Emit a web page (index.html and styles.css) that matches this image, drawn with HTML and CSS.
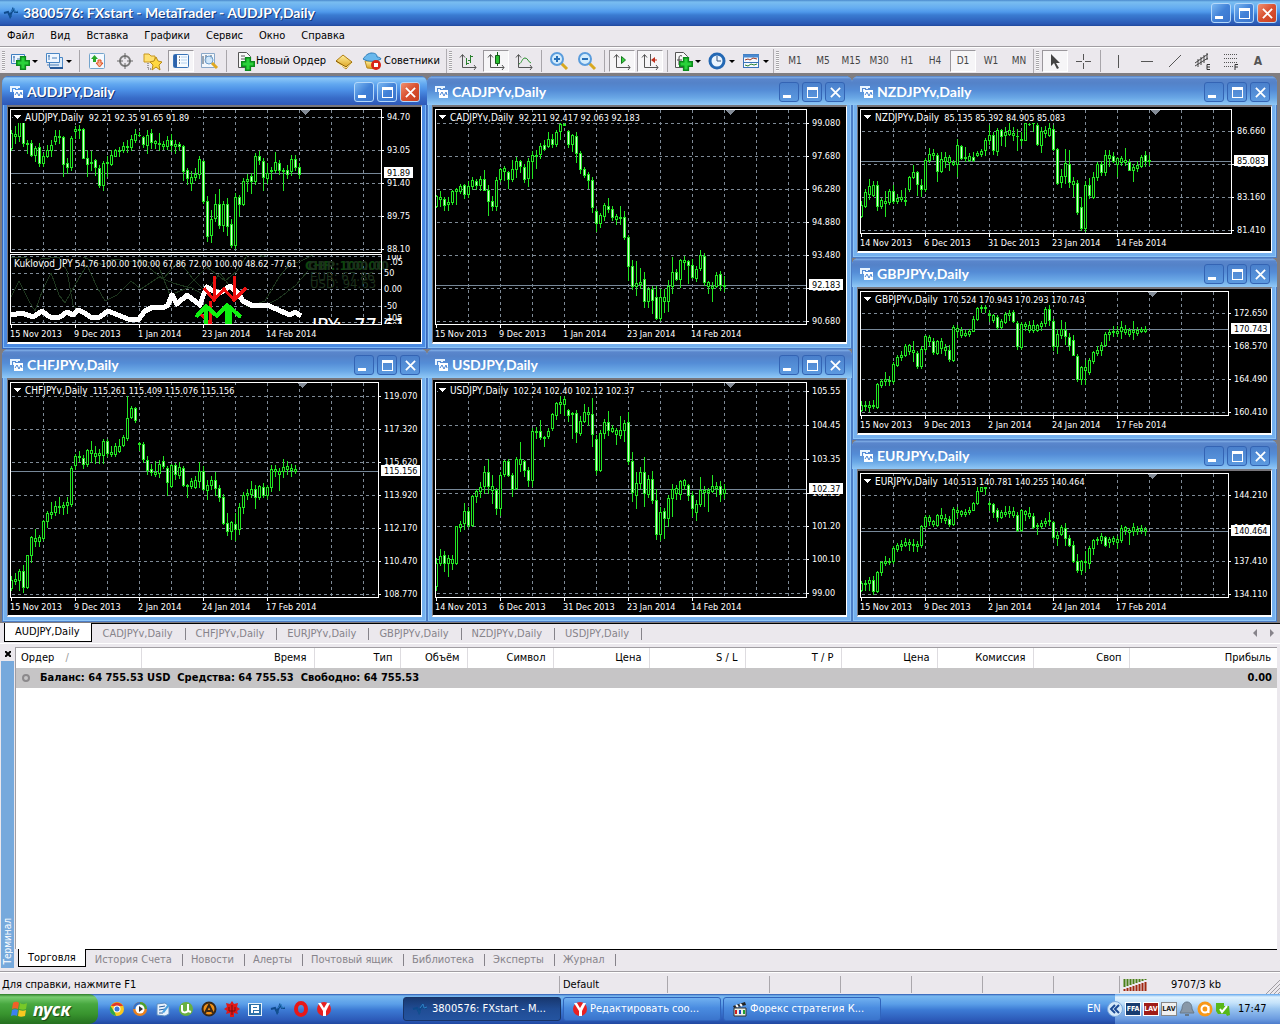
FILE: index.html
```html
<!DOCTYPE html>
<html lang="ru">
<head>
<meta charset="utf-8">
<title>3800576: FXstart - MetaTrader - AUDJPY,Daily</title>
<link rel="stylesheet" href="styles.css">
</head>
<body>
<svg class="defs" aria-hidden="true">
  <defs>
    <linearGradient id="gold" x1="0" y1="0" x2="0" y2="1"><stop offset="0" stop-color="#fff0a0"/><stop offset="1" stop-color="#d89a10"/></linearGradient>
    <symbol id="i-app" viewBox="0 0 16 16"><path d="M1 8l4-1 2 4 3-7 2 3h3" fill="none" stroke="#0e4a8c" stroke-width="2"/><path d="M5 7l2 7 2-3" fill="#12508f"/><path d="M8 7l3-4 1 4 3-1" fill="none" stroke="#2f7fc4"/></symbol>
    <symbol id="i-doc" viewBox="0 0 16 16"><path d="M2 8V3h9M5 5v3M8 2v3" fill="none" stroke="#e8f4ff" stroke-width="2"/><path d="M5 6h9v8H5z" fill="#fff"/><path d="M6 11l2-3 2 4 2-4 1 3" fill="none" stroke="#4a86d4"/></symbol>
    <symbol id="i-plus" viewBox="0 0 18 18"><path d="M6 1h6v5h5v6h-5v5H6v-5H1V6h5z" fill="#2ad23a" stroke="#0c8a1c" stroke-width="2"/></symbol>
    <symbol id="i-new-chart" viewBox="0 0 20 20"><path d="M1.500 3.500h13v9h-13z" fill="#eef6ff" stroke="#3f7fc0"/><path d="M4 5v6M3 6h2M7 8h5" stroke="#4a7fb8"/><svg x="6" y="5" width="14" height="14"><use href="#i-plus"/></svg></symbol>
    <symbol id="i-profiles" viewBox="0 0 20 20"><path d="M5.500 6.500h13v10h-13z" fill="#dceaf8" stroke="#4a86c4"/><path d="M2.500 2.500h13v9h-13z" fill="#eef6ff" stroke="#4a86c4"/><path d="M5 4v5M4 5h2M8 7h5M3 14h12" stroke="#4a7fb8" fill="none"/><path d="M6 17h13" stroke="#285a98" stroke-width="2"/></symbol>
    <symbol id="i-market" viewBox="0 0 20 20"><rect x="2.500" y="2.500" width="15" height="15" rx="1" fill="#f4f9ff" stroke="#74a4cc"/><path d="M7.500 4l3.500 4H9v3H6V8H4z" fill="#28a828"/><path d="M12.500 16L9 12h2V9h3v3h2z" fill="#f6b090" stroke="#e05020"/></symbol>
    <symbol id="i-cross" viewBox="0 0 20 20"><circle cx="10" cy="10" r="5" fill="none" stroke="#777" stroke-width="2"/><path d="M10 2v6M10 12v6M2 10h6M12 10h6" stroke="#666"/></symbol>
    <symbol id="i-fav" viewBox="0 0 20 20"><path d="M1 3h5l2 2h4v6H1z" fill="#ffe070" stroke="#c89820"/><path d="M5 12v6h3" fill="none" stroke="#555" stroke-dasharray="1 1"/><path d="M13 6l2 4 4 1-3 3 1 5-4-3-4 3 1-5-3-3 4-1z" fill="#ffd840" stroke="#b88a18"/></symbol>
    <symbol id="i-term" viewBox="0 0 20 20"><rect x="2.500" y="3.500" width="15" height="13" rx="1" fill="#f6fbff" stroke="#3a74b8" stroke-width="1"/><path d="M3 4h3v12H3z" fill="#2c62ac"/><path d="M8 6h1M8 9h1M8 12h1" stroke="#222"/><path d="M10 6h6M10 9h6M10 12h6" stroke="#b4d0ee"/></symbol>
    <symbol id="i-tester" viewBox="0 0 20 20"><path d="M2.500 2.500h13v14h-13z" fill="#f2f7fc" stroke="#8aa8c8"/><path d="M4 5v8M7 4v7M12 4v4" stroke="#456"/><circle cx="10" cy="9" r="4" fill="#c8e4fa" fill-opacity=".8" stroke="#6a9ac8"/><path d="M13 12l5 5" stroke="#e0a820" stroke-width="3"/></symbol>
    <symbol id="i-order" viewBox="0 0 20 20"><path d="M3.500 1.500h8l4 4v11h-12z" fill="#f8f8f8" stroke="#555"/><path d="M6 5h4M6 8h6M6 11h4M6 14h3" stroke="#555"/><svg x="6" y="6" width="14" height="14"><use href="#i-plus"/></svg></symbol>
    <symbol id="i-book" viewBox="0 0 20 20"><path d="M2 10l7-6 9 7-6 7z" fill="url(#gold)" stroke="#b07c10"/><path d="M2 10l10 6 6-5" fill="none" stroke="#8c6008"/><path d="M3 12l9 5 6-5" fill="none" stroke="#fff0b0"/></symbol>
    <symbol id="i-expert" viewBox="0 0 20 20"><path d="M3 10l2 7 10 1 2-8z" fill="url(#gold)" stroke="#b88a20"/><path d="M1 8c2-2 3-5 8-6 4 0 6 1 6 4 2 0 4 1 4 2-5 3-13 3-18 0z" fill="#6ab8ec" stroke="#2c7cb8"/><circle cx="14" cy="14" r="5" fill="#d82418"/><path d="M12 12h4v4h-4z" fill="#fff"/></symbol>
    <symbol id="i-axes" viewBox="0 0 20 20"><path d="M4.500 4v12.500H18M2 6.500l2.500-3 2.500 3M16 14l2 2.500-2 2.500" fill="none" stroke="#555"/></symbol>
    <symbol id="i-bars" viewBox="0 0 20 20"><use href="#i-axes"/><path d="M8.500 7v7M8 12.500h3M12.500 4v8M10 9.500h2M13 5.500h2" stroke="#28802c"/></symbol>
    <symbol id="i-candles" viewBox="0 0 20 20"><use href="#i-axes"/><path d="M11.500 1v14" stroke="#145c18"/><path d="M9.500 4.500h4v8h-4z" fill="#28c030" stroke="#145c18"/></symbol>
    <symbol id="i-line" viewBox="0 0 20 20"><use href="#i-axes"/><path d="M5 13c3-1 3-6 6-6s3 4 6 5" fill="none" stroke="#28902c"/></symbol>
    <symbol id="i-zin" viewBox="0 0 20 20"><path d="M12 12l6 6" stroke="#d8a820" stroke-width="3"/><circle cx="8" cy="8" r="6" fill="#d4ecfc" stroke="#5a9cdc" stroke-width="2"/><path d="M8 5v6M5 8h6" stroke="#2870b8" stroke-width="2"/></symbol>
    <symbol id="i-zout" viewBox="0 0 20 20"><path d="M12 12l6 6" stroke="#d8a820" stroke-width="3"/><circle cx="8" cy="8" r="6" fill="#d4ecfc" stroke="#5a9cdc" stroke-width="2"/><path d="M5 8h6" stroke="#2870b8" stroke-width="2"/></symbol>
    <symbol id="i-scroll" viewBox="0 0 20 20"><use href="#i-axes"/><path d="M9.500 5.500l4 3.500-4 3.500z" fill="#38d040" stroke="#187820"/></symbol>
    <symbol id="i-shift" viewBox="0 0 20 20"><use href="#i-axes"/><path d="M10.500 3v12" stroke="#555"/><path d="M17 9h-4" stroke="#c02c18"/><path d="M15 6v6l-4-3z" fill="#c02c18"/></symbol>
    <symbol id="i-ind" viewBox="0 0 20 20"><path d="M2.500 1.500h8l4 4v11h-12z" fill="#f8f8f8" stroke="#555"/><path d="M6 14V7c0-2 1-3 3-2M4 9h5" fill="none" stroke="#444"/><svg x="6" y="6" width="14" height="14"><use href="#i-plus"/></svg></symbol>
    <symbol id="i-clock" viewBox="0 0 20 20"><circle cx="10" cy="10" r="7" fill="#eaf5ff" stroke="#2468b4" stroke-width="3"/><path d="M10 5v5h4" fill="none" stroke="#33507a" stroke-width="1"/></symbol>
    <symbol id="i-tpl" viewBox="0 0 20 20"><rect x="2.500" y="3.500" width="15" height="13" fill="#f4f9ff" stroke="#3a74b8"/><path d="M2 5h16" stroke="#4a8ad0" stroke-width="3"/><path d="M2 11.500h16" stroke="#3a74b8"/><path d="M4 9l3-1 2 1 3-2 4 1" fill="none" stroke="#a03820"/><path d="M4 14l3 1 3-2 3 1 3-1" fill="none" stroke="#288030"/></symbol>
    <symbol id="i-cursor" viewBox="0 0 20 20"><path d="M6 3v12l3-3 3 6 2-1-3-5h4z" fill="#444"/></symbol>
    <symbol id="i-hair" viewBox="0 0 20 20"><path d="M10.500 3v6M10.500 12v6M3 10.500h6M12 10.500h6" stroke="#555"/></symbol>
    <symbol id="i-v" viewBox="0 0 20 20"><path d="M10.500 4v13" stroke="#555"/></symbol>
    <symbol id="i-h" viewBox="0 0 20 20"><path d="M5 10.500h12" stroke="#555"/></symbol>
    <symbol id="i-trend" viewBox="0 0 20 20"><path d="M5 16L17 4" stroke="#555"/></symbol>
    <symbol id="i-chan" viewBox="0 0 20 20"><path d="M3 12L16 3M3 15L16 7M6 8v8M9 6v8M12 4v8M15 2v7" fill="none" stroke="#444"/><path d="M18 13.500h-3v5h3M15 16h3" fill="none" stroke="#333"/></symbol>
    <symbol id="i-fibo" viewBox="0 0 20 20"><path d="M4 3.500h14M4 7.500h14M4 11.500h14M4 15.500h9" stroke="#555" stroke-dasharray="1 1"/><path d="M15 19v-5.500h3M15 16h3" fill="none" stroke="#333"/></symbol>
    <symbol id="i-flag" viewBox="0 0 20 20"><path d="M3 4c3-2 5-1 6 0L8 10C6 9 4 9 2 10z" fill="#f06028"/><path d="M10 4c3 2 5 1 7 0l-1 6c-2 1-4 1-7 0z" fill="#78c828"/><path d="M2 11c2-1 4-1 6 0l-1 6c-2-1-4-1-6 0z" fill="#3c80f0"/><path d="M9 11c3 1 5 1 7 0l-1 6c-3 1-5 1-7 0z" fill="#f8c820"/></symbol>
    <symbol id="i-chrome" viewBox="0 0 16 16"><circle cx="8" cy="8" r="7" fill="#f8c820"/><path d="M2 5a7 7 0 0 1 12 0H8z" fill="#e03828"/><path d="M1.500 5L6 12l1 3A7 7 0 0 1 1.500 5z" fill="#30a848"/><circle cx="8" cy="8" r="3.500" fill="#fff"/><circle cx="8" cy="8" r="2.500" fill="#3878d8"/></symbol>
    <symbol id="i-wmp" viewBox="0 0 16 16"><circle cx="8" cy="8" r="7" fill="#e88020"/><path d="M8 1a7 7 0 0 1 7 7H8z" fill="#48a030"/><path d="M1 8a7 7 0 0 1 7-7v7z" fill="#3070c8"/><circle cx="8" cy="8" r="4.500" fill="#fff"/><path d="M7 5l4 3-4 3z" fill="#333"/></symbol>
    <symbol id="i-desk" viewBox="0 0 16 16"><path d="M2 3l8-1 4 3v8l-4 2-8-1z" fill="#e8f2fc" stroke="#5a8cc0"/><path d="M4 6l6-1M4 9l6-1M4 12h4" stroke="#2860a0"/><path d="M7 11l6-8 2 1-6 8z" fill="#48a0e0"/></symbol>
    <symbol id="i-ut" viewBox="0 0 16 16"><circle cx="8" cy="8" r="7" fill="#68b040"/><path d="M4 4v5c0 3 4 3 6 1l3 1M10 3v7" fill="none" stroke="#fff" stroke-width="2"/></symbol>
    <symbol id="i-aimp" viewBox="0 0 16 16"><circle cx="8" cy="8" r="6.500" fill="#f09018" stroke="#382818" stroke-width="2"/><path d="M4 12l4-8 4 8M6 10h4" fill="none" stroke="#382818" stroke-width="2"/></symbol>
    <symbol id="i-red" viewBox="0 0 16 16"><path d="M8 0l2 3 4-1-1 4 3 2-3 2 1 3-4-1v4H6v-4l-4 1 1-3-3-2 3-2-1-4 4 1z" fill="#e01818"/><path d="M5 6v4M8 4v10M11 6v4M5 10h6" fill="none" stroke="#701010"/></symbol>
    <symbol id="i-blue" viewBox="0 0 16 16"><rect x="1.500" y="2.500" width="13" height="12" fill="#2c70a8" stroke="#e4f0f8"/><path d="M5 12V5h6v3H5M7 11h5" fill="none" stroke="#fff" stroke-width="2"/></symbol>
    <symbol id="i-opera" viewBox="0 0 16 16"><ellipse cx="8" cy="8" rx="5" ry="6" fill="none" stroke="#e81818" stroke-width="4"/></symbol>
    <symbol id="i-ya" viewBox="0 0 16 16"><circle cx="8" cy="8" r="7" fill="#e82020"/><path d="M2 2l5 8v5h3v-5l4-8h-3L8 7 5 2z" fill="#fff"/></symbol>
    <symbol id="i-clap" viewBox="0 0 16 16"><path d="M1 5l12-4 1 3L2 7z" fill="#222"/><path d="M4 4l2 2M8 3l2 2" stroke="#fff" stroke-width="2"/><path d="M2 7h12v8H2z" fill="#e8f0e8" stroke="#333"/><path d="M4 9v4" stroke="#d02020" stroke-width="2"/><path d="M8 9v4" stroke="#2040c0" stroke-width="2"/><path d="M12 9v4" stroke="#20a030" stroke-width="2"/></symbol>
    <symbol id="i-chev" viewBox="0 0 16 16"><circle cx="8" cy="8" r="7.500" fill="#d4e8fa" stroke="#7aa8dc"/><path d="M8 4L4 8l4 4M12 4L8 8l4 4" fill="none" stroke="#1c4a94" stroke-width="2"/></symbol>
    <symbol id="i-bell" viewBox="0 0 16 16"><path d="M8 1c4 0 5 4 5 7l2 4H1l2-4c0-3 1-7 5-7z" fill="#8898a8" stroke="#687888"/><path d="M6 13h4v2H6z" fill="#687888"/></symbol>
    <symbol id="i-avast" viewBox="0 0 16 16"><circle cx="8" cy="8" r="7.500" fill="#f89818"/><circle cx="8" cy="8" r="3.500" fill="none" stroke="#fff" stroke-width="2"/><path d="M11.500 5v7" stroke="#fff" stroke-width="2"/></symbol>
    <symbol id="i-ok" viewBox="0 0 16 16"><path d="M1 2h8v3h5l1 9-3 1-1-2H3L1 10z" fill="#58b818"/><path d="M5 8l2 3 5-6" fill="none" stroke="#fff" stroke-width="2"/></symbol>
    <symbol id="i-signal" viewBox="0 0 24 14"><path d="M1.500 1v8M4.500 1v7M7.500 1v6M10.500 1v5M13.500 1v4M16.500 1v3M19.500 1v2M22.500 1v1" stroke="#4a8018" stroke-width="2"/><path d="M1.500 11v2M4.500 10v3M7.500 9v4M10.500 8v5M13.500 7v6M16.500 6v7M19.500 5v8M22.500 4v9" stroke="#a02810" stroke-width="2"/></symbol>
  </defs>
</svg>

<header class="titlebar">
  <svg class="ic16"><use href="#i-app"/></svg>
  <h1 class="caption">3800576: FXstart - MetaTrader - AUDJPY,Daily</h1>
  <div class="winbtns">
    <button class="wb min" aria-label="Свернуть"></button>
    <button class="wb max" aria-label="Развернуть"></button>
    <button class="wb close" aria-label="Закрыть"><svg viewBox="0 0 12 12"><path d="M1 1l10 10M11 1L1 11"/></svg></button>
  </div>
</header>

<nav class="menu">
  <button>Файл</button><button>Вид</button><button>Вставка</button><button>Графики</button><button>Сервис</button><button>Окно</button><button>Справка</button>
</nav>

<div class="toolbar">
  <div class="tgroup">
    <i class="grip"></i>
    <button class="tb split" aria-label="Новый график"><svg><use href="#i-new-chart"/></svg></button>
    <button class="tb split" aria-label="Профили"><svg><use href="#i-profiles"/></svg></button>
    <i class="tsep"></i>
    <button class="tb" aria-label="Обзор рынка"><svg><use href="#i-market"/></svg></button>
    <button class="tb" aria-label="Окно данных"><svg><use href="#i-cross"/></svg></button>
    <button class="tb" aria-label="Навигатор"><svg><use href="#i-fav"/></svg></button>
    <button class="tb on" aria-label="Терминал"><svg><use href="#i-term"/></svg></button>
    <button class="tb" aria-label="Тестер"><svg><use href="#i-tester"/></svg></button>
    <i class="tsep"></i>
    <button class="tb order"><svg><use href="#i-order"/></svg>Новый Ордер</button>
    <button class="tb" aria-label="MetaEditor"><svg><use href="#i-book"/></svg></button>
    <button class="tb experts"><svg><use href="#i-expert"/></svg>Советники</button>
  </div>
  <div class="tgroup">
    <i class="grip"></i>
    <button class="tb" aria-label="Бары"><svg><use href="#i-bars"/></svg></button>
    <button class="tb on" aria-label="Свечи"><svg><use href="#i-candles"/></svg></button>
    <button class="tb" aria-label="Линия"><svg><use href="#i-line"/></svg></button>
    <i class="tsep"></i>
    <button class="tb" aria-label="Увеличить"><svg><use href="#i-zin"/></svg></button>
    <button class="tb" aria-label="Уменьшить"><svg><use href="#i-zout"/></svg></button>
    <i class="tsep"></i>
    <button class="tb on" aria-label="Автопрокрутка"><svg><use href="#i-scroll"/></svg></button>
    <button class="tb on" aria-label="Сдвиг"><svg><use href="#i-shift"/></svg></button>
    <i class="tsep"></i>
    <button class="tb split" aria-label="Индикаторы"><svg><use href="#i-ind"/></svg></button>
    <button class="tb split" aria-label="Периоды"><svg><use href="#i-clock"/></svg></button>
    <button class="tb split" aria-label="Шаблоны"><svg><use href="#i-tpl"/></svg></button>
  </div>
  <div class="tgroup periods">
    <i class="grip"></i>
    <button class="tb">M1</button><button class="tb">M5</button><button class="tb">M15</button><button class="tb">M30</button><button class="tb">H1</button><button class="tb">H4</button><button class="tb on">D1</button><button class="tb">W1</button><button class="tb">MN</button>
  </div>
  <div class="tgroup">
    <i class="grip"></i>
    <button class="tb on" aria-label="Курсор"><svg><use href="#i-cursor"/></svg></button>
    <button class="tb" aria-label="Перекрестие"><svg><use href="#i-hair"/></svg></button>
    <i class="tsep"></i>
    <button class="tb" aria-label="Вертикальная линия"><svg><use href="#i-v"/></svg></button>
    <button class="tb" aria-label="Горизонтальная линия"><svg><use href="#i-h"/></svg></button>
    <button class="tb" aria-label="Трендовая линия"><svg><use href="#i-trend"/></svg></button>
    <button class="tb" aria-label="Канал"><svg><use href="#i-chan"/></svg></button>
    <button class="tb" aria-label="Фибоначчи"><svg><use href="#i-fibo"/></svg></button>
    <button class="tb letter">A</button>
  </div>
</div>

<main class="workspace">
  <div class="wcol">
    <section class="win active" data-chart="AUDJPY"></section>
    <section class="win" data-chart="CHFJPYv"></section>
  </div>
  <div class="wcol">
    <section class="win" data-chart="CADJPYv"></section>
    <section class="win" data-chart="USDJPY"></section>
  </div>
  <div class="wcol">
    <section class="win" data-chart="NZDJPYv"></section>
    <section class="win" data-chart="GBPJPYv"></section>
    <section class="win" data-chart="EURJPYv"></section>
  </div>
</main>

<template id="win-tpl">
  <div class="wtitle">
    <svg class="ic16"><use href="#i-doc"/></svg>
    <h2 class="caption"></h2>
    <div class="winbtns">
      <button class="wb min" aria-label="Свернуть"></button>
      <button class="wb max" aria-label="Развернуть"></button>
      <button class="wb close" aria-label="Закрыть"><svg viewBox="0 0 12 12"><path d="M1 1l10 10M11 1L1 11"/></svg></button>
    </div>
  </div>
  <div class="client"></div>
</template>

<nav class="tabs charttabs">
  <button class="tab sel">AUDJPY,Daily</button><button class="tab">CADJPYv,Daily</button><button class="tab">CHFJPYv,Daily</button><button class="tab">EURJPYv,Daily</button><button class="tab">GBPJPYv,Daily</button><button class="tab">NZDJPYv,Daily</button><button class="tab">USDJPY,Daily</button>
  <span class="fill"></span>
  <button class="arrow" aria-label="Назад"><svg viewBox="0 0 4 8"><path d="M4 0v8L0 4z"/></svg></button>
  <button class="arrow" aria-label="Вперёд"><svg viewBox="0 0 4 8"><path d="M0 0v8l4-4z"/></svg></button>
</nav>

<section class="terminal">
  <aside class="side">
    <button class="x" aria-label="Закрыть"><svg viewBox="0 0 6 6"><path d="M0 0l6 6M6 0L0 6"/></svg></button>
    <div class="sidelabel"><span>Терминал</span></div>
  </aside>
  <div class="tmain">
    <div class="sheet">
      <table class="orders">
        <colgroup><col class="c-order"><col class="c-time"><col class="c-type"><col class="c-vol"><col class="c-type"><col class="c-num"><col class="c-num"><col class="c-num"><col class="c-num"><col class="c-num"><col class="c-num"><col></colgroup>
        <thead><tr><th>Ордер <span class="slash">∕</span></th><th>Время</th><th>Тип</th><th>Объём</th><th>Символ</th><th>Цена</th><th>S / L</th><th>T / P</th><th>Цена</th><th>Комиссия</th><th>Своп</th><th>Прибыль</th></tr></thead>
        <tbody><tr><td colspan="11"><i class="dot"></i>Баланс: 64 755.53 USD&nbsp; Средства: 64 755.53&nbsp; Свободно: 64 755.53</td><td>0.00</td></tr></tbody>
      </table>
    </div>
    <nav class="tabs termtabs">
      <button class="tab sel">Торговля</button><button class="tab">История Счета</button><button class="tab">Новости</button><button class="tab">Алерты</button><button class="tab">Почтовый ящик</button><button class="tab">Библиотека</button><button class="tab">Эксперты</button><button class="tab">Журнал</button>
      <span class="fill"></span>
    </nav>
  </div>
</section>

<footer class="status">
  <span class="help">Для справки, нажмите F1</span>
  <span class="s108">Default</span><span class="s102"></span><span class="s70"></span><span class="s70"></span><span class="s70"></span><span class="s70"></span><span class="s66"></span>
  <span class="conn"><svg><use href="#i-signal"/></svg>9707/3 kb</span>
  <svg class="size" viewBox="0 0 14 14"><path d="M0 14L14 0M4 14L14 4M8 14l6-6M12 14l2-2"/></svg>
</footer>

<div class="taskbar">
  <button class="start"><svg><use href="#i-flag"/></svg>пуск</button>
  <div class="quick">
    <svg><use href="#i-chrome"/></svg><svg><use href="#i-wmp"/></svg><svg><use href="#i-desk"/></svg><svg><use href="#i-ut"/></svg><svg><use href="#i-aimp"/></svg><svg><use href="#i-red"/></svg><svg><use href="#i-blue"/></svg><svg><use href="#i-app"/></svg><svg><use href="#i-opera"/></svg><svg><use href="#i-ya"/></svg>
  </div>
  <div class="tasks">
    <button class="task cur"><svg><use href="#i-app"/></svg>3800576: FXstart - M...</button>
    <button class="task"><svg><use href="#i-ya"/></svg>Редактировать соо...</button>
    <button class="task"><svg><use href="#i-clap"/></svg>Форекс стратегия К...</button>
  </div>
  <span class="lang">EN</span>
  <div class="tray">
    <svg class="chev"><use href="#i-chev"/></svg>
    <span class="badge ffa">FFA</span><span class="badge lav">LAV</span><span class="badge lav2">LAV</span>
    <svg><use href="#i-bell"/></svg><svg><use href="#i-avast"/></svg><svg><use href="#i-ok"/></svg>
    <time class="clock">17:47</time>
  </div>
</div>
<script src="charts.js"></script>
</body>
</html>
```

FILE: styles.css
```css
*, *::before { box-sizing: border-box; }
:root {
  --ui: "DejaVu Sans Condensed", "Noto Sans", sans-serif;
  --head: Lato, "Noto Sans", sans-serif;
  --face: #ebe8ed;
}
body {
  margin: 0;
  min-height: 100vh;
  display: flex;
  flex-direction: column;
  background: var(--face);
  font: 11px/14px var(--ui);
  color: #000;
}
button {
  margin: 0;
  padding: 0;
  border: 0;
  background: none;
  font: inherit;
  color: inherit;
  white-space: nowrap;
}
.defs { position: absolute; width: 0; height: 0; }
.ic16 { width: 16px; height: 16px; flex: none; }

.caption {
  flex: 1;
  margin: 0;
  font: bold 14px/18px var(--head);
  color: #fff;
  white-space: nowrap;
}
.titlebar {
  height: 26px;
  display: flex;
  align-items: center;
  gap: 4px;
  padding: 0 3px;
  background: linear-gradient(#4a88cc 0, #79bdf0 2px, #64acf0 8px, #4e98ea 12px, #3a7cd2 15px, #2a58b4 24px, #1f489c 26px);
}
.titlebar .caption, .active .caption { text-shadow: 1px 1px 0 #143878; }

.winbtns { display: flex; gap: 3px; }
.wb {
  width: 20px;
  height: 20px;
  display: grid;
  place-items: center;
  border: 1px solid #b4d8fa;
  border-radius: 3px;
  background: linear-gradient(135deg, #7ab8f2, #4282d8 50%, #3a74cc);
}
.min::before { content: ""; width: 8px; height: 3px; margin: 8px 4px 0 0; background: #fff; }
.max::before { content: ""; width: 11px; height: 11px; border: 1px solid #fff; border-top-width: 3px; }
.wb svg { width: 11px; height: 11px; fill: none; stroke: #fff; stroke-width: 2; }
.titlebar .close, .active .close { background: linear-gradient(135deg, #f09070, #d85030 50%, #c84020); }
.win:not(.active) .wb { border-color: #3464b4; background: linear-gradient(#4a80cc, #5c9ae0); }

.menu { height: 20px; display: flex; align-items: center; padding-left: 7px; gap: 16px; }

.toolbar {
  height: 27px;
  display: flex;
  align-items: stretch;
  border-top: 1px solid #a09da2;
  box-shadow: inset 0 1px #fff;
  padding-top: 2px;
}
.tgroup { display: flex; align-items: center; }
.tgroup + .tgroup { border-left: 1px solid #b0adb2; }
.grip {
  width: 3px;
  height: 20px;
  margin: 0 2px;
  background: repeating-linear-gradient(#a8a5aa 0 1px, #f8f8f8 1px 2px);
}
.tgroup:first-child .grip { margin-right: 3px; }
.tb {
  width: 26px;
  height: 22px;
  margin: 0 1px;
  display: flex;
  align-items: center;
  justify-content: center;
  border: 1px solid transparent;
}
.tb svg { width: 20px; height: 20px; flex: none; }
.tb.on { border-color: #9a979c #fff #fff #9a979c; background: #f6f5f7; }
.split { width: 32px; }
.split::after { content: ""; border: 3px solid transparent; border-top-color: #000; border-bottom: 0; margin: 0 2px; }
.order { width: 98px; justify-content: flex-start; gap: 1px; padding-left: 3px; }
.experts { width: 86px; justify-content: flex-start; gap: 2px; padding-left: 2px; }
.tsep { width: 1px; height: 22px; margin: 0 3px; background: #a8a5aa; }
.periods .tb { font-size: 10px; color: #444; }
.letter { font-size: 12px; font-weight: bold; color: #555; }

.workspace {
  display: flex;
  background: #807d80;
  padding: 3px 3px 1px 2px;
}
.wcol { flex: 1; min-width: 0; display: flex; flex-direction: column; }
.win {
  border-radius: 7px 7px 0 0;
  padding: 0 5px 5px;
  background: #74b0ee;
  box-shadow: inset 0 0 0 1px #4c7cc4, inset 0 0 0 2px #8cc4f6;
}
.win.active { background: #4a8ae2; box-shadow: inset 0 0 0 1px #3868bc, inset 0 0 0 2px #7cb8f8; }
.wtitle {
  height: 29px;
  margin: 0 -5px;
  padding: 3px 7px 0 7px;
  display: flex;
  align-items: center;
  gap: 2px;
  border-radius: 7px 7px 0 0;
  background: linear-gradient(#3c66b0 0, #82b0e8 1px, #5a86cc 3px, #5482c8 7px, #548cd6 14px, #6aa8e6 22px, #90c8f6 29px);
}
.active .wtitle { background: linear-gradient(#3468b8 0, #8cc8f8 2px, #62a8f0 8px, #4c90e6 14px, #386cc8 22px, #2e58b8 29px); }
.client {
  border: 1px solid #fff;
  border-top: 2px solid #77757a;
  border-left-color: #77757a;
  border-bottom-width: 2px;
  background: #000;
  overflow: hidden;
}
.chart { display: block; font: 9px/12px var(--ui); fill: #fff; shape-rendering: crispEdges; }
.chart .grid { stroke: #7e8a96; stroke-dasharray: 3 3; fill: none; }
.chart .frame { stroke: #fff; fill: none; }
.chart .price { stroke: #778899; }
.chart .mark { fill: #838b96; }
.chart .green { fill: #22e622; }
.chart .hollow, .chart .back { fill: #000; }
.chart .solid { fill: #d8ffd8; }
.chart .tag { fill: #fff; }
.chart .tagtext { fill: #000; }
.chart .name { font-size: 10px; }
.chart .faint { stroke: #1e361e; fill: none; }
.chart .yen { stroke: #fff; stroke-width: 5; fill: none; stroke-linejoin: round; }
.chart .sell { stroke: #f01010; stroke-width: 3; fill: none; }
.chart .buy { stroke: #10f010; stroke-width: 4; fill: none; }
.chart .cur { font-size: 13px; fill: #0e440e; }
.chart .dark { fill: #1c301c; }
.chart .strong { font-weight: bold; }
.chart .big { font: 20px var(--ui); }

.tabs { display: flex; color: #86838a; height: 20px; }
.tabs .fill { flex: 1; border-top: 1px solid #000; }
.tab { border-top: 1px solid #000; padding: 0 9px 0 11px; display: flex; align-items: center; }
.tab:not(.sel)::after { content: ""; width: 1px; height: 12px; margin-left: 12px; margin-right: -10px; background: #86838a; }
.tab.sel { border: 1px solid #000; border-top: 0; padding: 0 11px 0 10px; background: #fff; color: #000; height: 19px; }
.charttabs { padding-left: 4px; }
.arrow { width: 17px; border-top: 1px solid #000; }
.arrow svg { width: 4px; height: 8px; fill: #86838a; }

.terminal { flex: 1; display: flex; border-top: 1px solid #fff; padding: 3px 3px 2px 0; min-height: 120px; }
.side { width: 15px; display: flex; flex-direction: column; padding-bottom: 1px; }
.x { height: 14px; display: grid; place-items: center; }
.x svg { width: 6px; height: 6px; stroke: #000; stroke-width: 2; }
.sidelabel { flex: 1; width: 13px; margin-left: 1px; background: #76a9dc; color: #fff; display: flex; align-items: flex-end; justify-content: center; padding-bottom: 3px; font-size: 10px; }
.sidelabel span { writing-mode: vertical-rl; transform: rotate(180deg); line-height: 13px; }
.tmain { flex: 1; min-width: 0; display: flex; flex-direction: column; }
.sheet { flex: 1; background: #fff; border: 1px solid #a09da2; border-width: 1px 0 0 1px; }
.orders { width: 100%; border-collapse: collapse; table-layout: fixed; }
.orders th { height: 20px; padding: 0 7px 0 0; font-weight: normal; text-align: right; border-right: 1px solid #dedce0; }
.orders th:first-child { text-align: left; padding-left: 5px; }
.orders th:last-child { border-right: 0; padding-right: 6px; }
.slash { color: #999; margin-left: 8px; }
.orders td { height: 20px; padding: 0 5px 0 6px; background: #c6c5c6; font-weight: bold; white-space: nowrap; }
.orders td:last-child { text-align: right; }
.dot { display: inline-block; width: 8px; height: 8px; margin-right: 10px; border: 2px solid #8c8a8c; border-radius: 50%; vertical-align: -1px; }
.c-order { width: 125px; }
.c-time { width: 173px; }
.c-type { width: 86px; }
.c-vol { width: 67px; }
.c-num { width: 96px; }
.termtabs { padding-left: 3px; }
.termtabs .tab { padding: 0 9px; }
.termtabs .tab:not(.sel)::after { margin-left: 10px; }
.termtabs .tab.sel { height: 18px; }

.status { height: 23px; border-top: 1px solid #a09da2; box-shadow: inset 0 1px #fff; display: flex; align-items: center; padding-top: 3px; }
.status span { height: 17px; line-height: 17px; border-left: 1px solid #aaa7ac; padding-left: 3px; }
.status .help { flex: 1; border: 0; padding-left: 2px; }
.s108 { width: 108px; }
.s102 { width: 102px; }
.s70 { width: 71px; }
.s66 { width: 66px; }
.status .conn { width: 147px; display: flex; gap: 24px; align-items: center; }
.conn svg { width: 24px; height: 14px; }
.size { width: 14px; height: 14px; stroke: #a09da2; align-self: flex-end; }

.taskbar {
  height: 30px;
  display: flex;
  align-items: stretch;
  color: #fff;
  background: linear-gradient(#2c58b0 0, #78b8f0 2px, #5a9ee8 10px, #3c7ad4 16px, #2c5ab8 26px, #2048a0 30px);
}
.start {
  width: 98px;
  display: flex;
  align-items: center;
  gap: 3px;
  padding-left: 10px;
  border-radius: 0 9px 9px 0;
  background: linear-gradient(#2c7c28 0, #78cc70 3px, #48a840 10px, #38942e 20px, #257020 30px);
  font: italic bold 18px/20px "Noto Sans", sans-serif;
  text-shadow: 1px 1px 1px #1c4818;
}
.start svg { width: 20px; height: 20px; }
.quick { display: flex; align-items: center; gap: 7px; padding-left: 11px; }
.quick svg, .task svg, .tray svg { width: 16px; height: 16px; flex: none; }
.tasks { flex: 1; display: flex; gap: 2px; padding: 3px 0 3px 71px; align-items: stretch; }
.task { width: 158px; display: flex; align-items: center; gap: 2px; padding: 0 8px; border-radius: 3px; border: 1px solid #3064bc; background: linear-gradient(#70b0f0, #4a8ce0 45%, #3a74cc); }
.task.cur { background: linear-gradient(#183870, #204c94 50%, #2454a0); gap: 4px; border-color: #183468; }
.lang { align-self: center; width: 28px; }
.tray {
  width: 165px;
  display: flex;
  align-items: center;
  gap: 2px;
  background: linear-gradient(#60a4ec 0, #e0f2fe 3px, #c4e2fa 9px, #98c4f0 15px, #6c9ce0 25px, #4c7ccc 30px);
}
.chev { margin-left: -8px; }
.badge { width: 16px; height: 14px; font-size: 7px; line-height: 12px; font-weight: bold; text-align: center; border: 1px solid #fff; }
.ffa { background: #183c70; color: #fff; }
.lav { background: #a01c18; color: #fff; }
.lav2 { background: #f0f0f0; color: #222; border-color: #888; }
.clock { margin-left: 5px; color: #000; }
```

FILE: charts.js
```js
// Candle strings hold "high top bottom low" for each day on a scale of three
// units per pixel; a trailing "-" marks a day that closed lower.
const SCALE = 3;
const STEP = 4;

const CHARTS = {
  AUDJPY: {
    quote: "92.21 92.35 91.65 91.89", h: 235, right: 373, base: 32, split: true,
    labels: [[10, "94.70"], [43, "93.05"], [76, "91.40"], [109, "89.75"], [142, "88.10"]],
    price: [66, "91.89", 29],
    dates: ["15 Nov 2013", "9 Dec 2013", "1 Jan 2014", "23 Jan 2014", "14 Feb 2014"],
    data: "165 175 220 225,155 178 185 205,135 143 185 200,130 141 205 213-,195 205 207 235,197 205 240 245-,215 220 240 258,205 218 265 275-,235 243 265 275,210 225 243 246,195 210 225 245,165 183 200 208,165 183 187 205-,185 188 268 305-,250 265 277 295-,185 190 277 287,155 163 170 190,152 162 165 190,160 162 250 250-,225 250 268 305-,230 262 265 285,253 256 276 300-,270 280 330 338-,258 265 330 347,245 263 265 305,225 240 267 270,222 227 243 245,218 225 230 243,203 213 225 232,195 213 218 233,180 192 218 225,163 177 195 203,172 180 182 183,183 186 208 218-,165 182 210 235,163 175 203 220-,195 200 205 220,175 205 208 225,200 208 213 223,185 197 215 222,178 197 210 230-,197 207 213 235,203 207 215 225-,212 215 288 315-,280 285 310 327-,290 308 325 347,280 297 308 315,245 253 297 310,255 260 378 385-,365 378 483 500-,405 433 480 503,357 388 430 440,342 387 450 460-,380 388 450 470,370 388 455 480-,432 448 510 517-,355 367 510 520,360 367 387 423-,310 320 387 390,297 312 320 350,295 305 320 355-,235 243 320 327,230 245 255 267-,250 258 308 345-,265 295 310 325,278 285 290 312,232 263 287 292,257 265 285 297-,280 285 288 347,270 285 297 310-,242 253 290 300,240 252 277 287-,265 277 297 310-"
  },
  CADJPYv: {
    quote: "92.211 92.417 92.063 92.183", h: 235, right: 373, base: 32,
    labels: [[16, "99.080"], [49, "97.680"], [82, "96.280"], [115, "94.880"], [148, "93.480"], [181, "92.080"], [214, "90.680"]],
    price: [178, "92.183", 34],
    dates: ["15 Nov 2013", "9 Dec 2013", "1 Jan 2014", "23 Jan 2014", "14 Feb 2014"],
    data: "360 365 395 398,350 368 373 395,367 373 392 405-,367 383 388 405,345 350 383 388,340 343 348 387,328 333 348 355,328 332 357 370-,320 335 358 368,307 317 333 343,312 318 332 342-,305 313 330 347,287 313 345 347-,330 345 380 422-,365 378 393 407-,308 315 393 407,280 282 313 320,273 280 290 315,290 292 313 340-,255 283 312 320,248 260 283 308,255 260 275 293-,268 277 312 322-,250 258 310 335,230 242 260 310,227 240 243 280,205 213 237 250,197 210 222 225-,173 193 215 217,177 193 207 218-,165 172 208 215,145 147 168 193,145 147 150 150,165 168 208 217-,177 182 208 230,173 183 235 262-,228 235 283 295-,277 283 302 308-,293 297 315 340-,308 317 397 412-,402 410 445 470-,415 422 445 458,385 392 423 437,370 393 403 413-,395 403 427 437-,417 423 433 447,393 427 430 447,410 428 487 492-,480 487 575 615-,557 573 635 643-,558 625 633 660,580 623 627 640,592 612 680 697-,638 643 680 697,633 643 677 715-,633 667 730 733-,642 667 730 737,643 667 680 713,617 633 680 710,547 592 633 655,583 592 613 617-,552 557 613 637,545 557 562 583,555 560 572 625-,553 570 607 610-,573 582 610 620,527 542 580 585,535 543 622 630-,620 622 633 655,622 633 640 678,593 600 633 637,590 598 630 645-,605 630 633 650"
  },
  NZDJPYv: {
    quote: "85.135 85.392 84.905 85.083", h: 144, right: 373, base: 32,
    labels: [[24, "86.660"], [57, "84.910"], [90, "83.160"], [123, "81.410"]],
    price: [54, "85.083", 34],
    dates: ["14 Nov 2013", "6 Dec 2013", "31 Dec 2013", "23 Jan 2014", "14 Feb 2014"],
    data: "380 390 423 427,342 352 395 397,313 333 358 373,318 330 360 363,318 332 395 405-,370 377 395 400,350 380 385 425,342 348 382 388,330 348 380 385-,358 370 378 385,345 367 372 378,340 375 380 392,303 307 343 350,270 293 307 310,288 293 327 360-,313 330 343 363-,250 257 343 350,220 237 257 263,222 235 240 253,235 240 288 318-,233 253 290 293,232 247 260 277,240 247 263 287,255 262 268 270,193 212 268 305,210 213 250 253-,218 247 250 260,235 243 257 260,232 247 257 260-,228 235 242 245,222 228 237 245,190 195 227 240,152 180 195 207,172 180 227 237-,160 165 228 242,163 167 185 212-,157 173 180 213,143 167 177 180,157 175 182 195,163 183 185 227,173 193 197 210,143 145 195 195,143 147 149 150,143 144 146 170,143 150 208 212-,157 168 210 233,153 165 175 187,143 160 182 183,152 162 223 225-,220 223 325 327-,283 305 322 337,223 265 305 325,225 268 322 337-,307 320 327 365,315 325 413 417-,367 397 460 465-,320 330 460 468,310 330 360 370-,293 307 367 370,262 267 307 317,260 268 292 300-,227 240 293 300,227 240 250 273,233 243 260 263-,248 250 268 305,243 250 263 270,220 257 263 270,252 263 285 287-,268 278 285 320,260 270 280 290,240 247 273 277,228 242 258 273-,240 257 260 270"
  },
  GBPJPYv: {
    quote: "170.524 170.943 170.293 170.743", h: 144, right: 370, base: 214,
    labels: [[24, "172.650"], [57, "168.570"], [90, "164.490"], [123, "160.410"]],
    price: [40, "170.743", 39],
    dates: ["15 Nov 2013", "9 Dec 2013", "2 Jan 2014", "24 Jan 2014", "17 Feb 2014"],
    data: "980 990 1005 1010,978 990 995 1005,980 990 997 1010,975 990 995 1000,925 928 997 1000,913 918 930 937,893 912 918 930,905 917 920 932,863 867 920 925,842 848 870 873,830 840 848 855,808 815 840 845,808 812 830 838,800 825 832 860,830 835 875 880-,815 822 875 880,780 785 822 830,780 788 800 810,790 798 833 838-,795 800 835 838,790 800 820 835,808 818 825 840,810 825 852 858-,750 757 855 858,750 760 768 788,758 765 780 787,765 775 782 785,763 770 778 785,725 733 768 770,697 700 733 735,692 697 700 712,692 697 700 712,705 718 722 740,717 722 735 743,722 728 757 763-,733 740 757 760,713 718 742 745,705 715 720 735,705 713 740 743-,740 745 815 822-,742 747 817 822,742 748 755 767,738 750 765 773,735 750 767 772,747 752 765 768,740 745 755 765,697 703 745 755,692 702 737 750-,733 738 815 825-,762 778 815 835,735 762 780 790,742 765 785 808-,775 787 812 825-,780 797 840 842-,838 843 912 918-,875 878 912 928,855 878 885 927,850 857 893 897,828 832 860 865,815 825 835 842,803 812 825 840,772 778 812 815,762 773 778 795,755 768 773 785,755 768 775 785,740 758 770 790,750 763 772 778,760 765 778 785,738 765 772 792,757 765 775 782,758 763 768 773,755 762 768 773"
  },
  CHFJPYv: {
    quote: "115.261 115.409 115.076 115.156", h: 235, right: 370, base: 35,
    labels: [[16, "119.070"], [49, "117.320"], [82, "115.620"], [115, "113.920"], [148, "112.170"], [181, "110.470"], [214, "108.770"]],
    price: [91, "115.156", 39],
    dates: ["15 Nov 2013", "9 Dec 2013", "2 Jan 2014", "24 Jan 2014", "17 Feb 2014"],
    data: "693 705 730 737,685 703 708 718,672 680 707 735,660 680 728 742-,630 632 727 730,575 578 632 653,553 580 590 605,570 578 588 605,525 528 580 587,500 505 530 547,473 503 507 520,470 485 503 512,458 483 488 505,472 480 487 507,457 472 482 505,363 370 477 485,327 333 362 373,320 333 338 350,330 340 357 370-,312 315 358 363,290 315 325 352,303 325 335 355,313 325 332 355,282 290 330 355,283 290 325 335-,303 323 327 333,295 303 328 335,283 303 318 322,272 278 302 305,155 220 280 285,183 190 218 220,187 190 227 233-,292 296 299 315,293 297 343 353-,333 345 377 387-,357 372 383 390-,350 383 387 393,347 357 385 397,335 350 365 370-,363 370 413 450-,357 360 425 427,355 362 387 402-,353 367 390 400,365 370 420 425-,418 420 423 458,400 410 423 430,395 407 427 430,352 380 410 427,365 378 432 437-,405 420 437 463,395 405 420 432,383 407 430 450-,422 430 457 470-,447 458 535 537-,505 535 560 572-,528 533 560 582,505 537 552 587-,475 487 552 568,443 450 487 505,432 445 450 462,408 433 447 457,422 432 457 490-,420 425 457 463,415 427 450 457-,420 427 450 460,360 372 427 440,360 372 380 393,370 378 387 435,342 367 380 397,348 365 373 387,357 370 377 393,362 373 380 385"
  },
  USDJPY: {
    quote: "102.24 102.40 102.12 102.37", h: 235, right: 373, base: 35,
    labels: [[11, "105.55"], [45, "104.45"], [79, "103.35"], [113, "102.25"], [146, "101.20"], [179, "100.10"], [213, "99.00"]],
    price: [109, "102.37", 34],
    dates: ["14 Nov 2013", "6 Dec 2013", "31 Dec 2013", "23 Jan 2014", "14 Feb 2014"],
    data: "640 655 725 735,612 635 655 662,618 630 655 680-,632 640 655 695,630 643 655 672,543 545 655 657,528 538 547 560,475 498 535 552,487 500 540 547-,450 453 540 545,432 440 455 473,412 427 440 458,363 382 423 445,343 382 423 445-,392 423 437 475,430 437 490 507-,382 390 490 510,345 350 388 395,343 350 392 395-,385 390 433 455-,337 342 430 432,292 343 357 380,347 350 377 395-,367 375 407 425-,250 258 407 425,248 258 262 280,225 260 277 282-,273 277 280 305,250 258 275 280,205 208 250 255,173 175 210 223,152 173 178 205,155 162 178 210,193 195 210 230-,202 205 208 280,195 205 263 293-,215 228 265 270,178 203 230 233,187 203 208 240,160 208 268 303-,272 282 377 387-,255 265 375 380,222 232 265 280,200 232 255 270-,242 250 258 263,250 255 268 298,213 255 272 280,227 235 255 288,203 233 350 357-,322 350 443 470-,382 415 450 490,367 382 415 430,337 382 445 483-,390 402 447 458,380 402 465 475-,432 467 567 583-,487 502 567 585,490 500 520 580-,450 460 520 543,417 432 460 513,420 430 445 462,405 410 447 462,403 407 420 432,418 420 450 467-,440 450 490 513-,465 477 503 525,398 435 478 483,425 437 443 485,430 437 442 500,390 425 440 443,412 423 430 455,410 425 447 470-,418 432 445 460"
  },
  EURJPYv: {
    quote: "140.513 140.781 140.255 140.464", h: 144, right: 370, base: 126,
    labels: [[24, "144.210"], [57, "140.810"], [90, "137.410"], [123, "134.110"]],
    price: [60, "140.464", 39],
    dates: ["15 Nov 2013", "9 Dec 2013", "2 Jan 2014", "24 Jan 2014", "17 Feb 2014"],
    data: "710 715 735 740,705 715 718 735,698 705 715 735,693 705 740 747-,680 683 738 742,648 653 683 690,635 650 655 660,640 650 653 658,605 610 650 655,595 600 612 620,587 597 603 617,580 592 600 603,583 593 598 617,583 597 602 620,590 598 603 620,542 545 602 607,510 517 545 550,510 518 530 540,525 530 537 545,507 510 540 543,490 510 520 533,507 520 525 535,515 523 537 543-,487 493 537 540,487 495 503 517,497 500 508 513,493 502 508 515,487 497 502 507,472 475 495 497,427 440 475 477,425 427 438 440,425 427 430 447,470 475 478 495,475 478 503 517-,490 497 517 530-,495 502 517 520,483 503 507 515,485 500 505 517,487 500 510 518,503 510 557 560-,493 497 555 560,495 500 507 525,487 505 513 520,505 513 547 550-,535 540 543 567,527 535 545 550,520 530 535 543,503 525 530 540,528 532 578 582-,560 570 580 600,542 548 567 572,535 550 580 600-,570 580 600 605-,590 600 650 652-,628 648 675 683-,645 650 677 687,620 650 653 680,603 610 655 670,583 587 610 628,577 583 587 597,565 575 587 595,573 578 600 605-,577 583 593 607,573 580 590 597,573 583 593 610,542 550 587 592,543 548 555 567,550 555 563 597,535 547 560 570,543 552 560 567,540 550 557 565,548 553 560 570"
  }
};

// Lower pane of the AUDJPY chart, in chart pixels.
const INDICATOR = `
  <path class="faint" d="M3 190l8-16 10 20 6 10 8-22 8-16 8 22 6 8 10-18 12-20 10 22 8 14 12-6 14-14 10 8 18-12 14 6 14 4 20-20 18 14 12-10 14-22 12 8 14-12 16 8"/>
  <path class="faint" d="M3 150h14l10 8 6-6 18-2 8 14 6 34 10 10M75 150l20 8 10-6 30 4 20 16 16-18 14 18 20 20 20-16 14 24 18-6 14-24 10-12 12-4 16-8"/>
  <path class="faint" d="M130 152l20 6 12 30 20-8 14 8 16-22 22 30 20 4 16-8 18-14 12-14"/>
  <text class="cur strong" x="297" y="163">CHF: 100.00</text>
  <text class="cur strong dark" x="300" y="163">GBP: 100.00</text>
  <text class="cur dark" x="302" y="174">EUR: 67.86</text>
  <text class="cur dark" x="302" y="181">USD: 94.63</text>
  <polyline class="yen" points="3,208 14,206 25,210 34,204 42,210 52,210 59,205 65,208 70,203 75,205 84,211 92,210 100,204 110,208 120,212 130,213 137,204 145,200 155,201 160,198 164,188 169,197 179,188 192,198 195,189 199,180 205,184 212,186 222,179 230,186 235,194 245,199 259,198 275,205 282,208 287,205 293,209"/>
  <path class="sell" d="M206 169v24M196 181l10 12 11-12M226 169v24M215 181l11 12 12-12M202 194v23M192 207l10 9"/>
  <path class="buy" d="M198 218v-18M219 218v-18"/>
  <path class="buy" d="M188 210l10-11 11 10 10-11 14 12M222 218v-18"/>
  <text class="big" x="304" y="225">JPY: -77.61</text>`;

const rect = (x, y, w, h, cls) => `<rect class="${cls}" x="${x}" y="${y}" width="${w}" height="${h}"/>`;
const text = (x, y, s, cls = "") => `<text class="${cls}" x="${x}" y="${y}">${s}</text>`;

function candles(c) {
  let out = "";
  c.data.split(",").forEach((row, i) => {
    const down = row.endsWith("-");
    const [hi, top, bot, lo] = row.replace("-", "").split(" ").map(v => Math.floor(v / SCALE) - c.base);
    const x = 3 + i * STEP;
    out += rect(x, hi, 1, lo - hi + 1, "green");
    out += rect(x - 1, top, 3, Math.max(1, bot - top + 1), "green");
    if (bot - top > 1) out += rect(x, top + 1, 1, bot - top - 1, down ? "solid" : "hollow");
  });
  return out;
}

function chart(name, c) {
  const bottom = c.h - 18;
  const main = c.split ? 145 : bottom;
  const r = c.right;
  let g = "";
  for (let x = 35; x < r; x += 32) g += `M${x + 0.5} 3V${bottom}`;
  c.labels.forEach(([y]) => { g += `M4 ${y + 0.5}H${r}`; });
  if (c.split) [149, 166, 182, 199, 215].forEach(y => { g += `M4 ${y + 0.5}H${r}`; });

  let s = `<path class="grid" d="${g}"/>`;
  s += `<path class="price" d="M3 ${c.price[0] + 0.5}H${r}"/>`;
  s += candles(c);
  s += `<path class="mark" d="M${r - 81} 3h10l-5 5z"/>`;
  if (c.split) {
    s += rect(0, main + 1, r, 2, "back");
    s += `<clipPath id="pane"><rect x="3" y="148" width="410" height="69"/></clipPath><g clip-path="url(#pane)">${INDICATOR}</g>`;
    s += text(6, 160, `<tspan class="name">Kuklovod_JPY</tspan> 54.76 100.00 100.00 67.86 72.00 100.00 48.62 -77.61`);
    s += `<rect class="frame" x="2.5" y="147.5" width="${r - 2}" height="70"/>`;
    s += `<g clip-path="url(#pane)">` + text(378, 153, "100") + text(382, 158, ".05") + text(376, 169, "50") + text(376, 185, "0.00") + text(376, 202, "-50") + text(376, 214, "-105") + text(376, 222, "-100") + `</g>`;
  }
  s += `<rect class="frame" x="2.5" y="2.5" width="${r - 2}" height="${main - 2}"/>`;
  s += rect(5, 5, 0, 11, "back headback");
  s += `<path d="M6 8h7l-3.5 4z"/>`;
  s += text(17, 14, `<tspan class="name">${name},Daily</tspan>&nbsp; ${c.quote}`, "head");
  const lx = r + 6;
  c.labels.forEach(([y, t]) => { s += rect(r, y, 3, 1, "tag") + text(lx, y + 3, t); });
  const [py, pt, pw] = c.price;
  s += rect(r + 3, py - 6, pw, 11, "tag") + text(lx, py + 3, pt, "tagtext");
  c.dates.forEach((d, i) => {
    const x = i * 64 + 3;
    s += rect(x, bottom, 1, 4, "tag") + text(x - 1, bottom + 13, d);
  });
  return `<svg class="chart" width="413" height="${c.h}">${s}</svg>`;
}

document.querySelectorAll(".win").forEach(win => {
  const name = win.dataset.chart;
  const c = CHARTS[name];
  win.append(document.getElementById("win-tpl").content.cloneNode(true));
  win.querySelector(".caption").textContent = `${name},Daily`;
  win.querySelector(".client").innerHTML = chart(name, c);
  const width = win.querySelector(".head").getBBox().width;
  win.querySelector(".headback").setAttribute("width", Math.ceil(width) + 16);
});
```
